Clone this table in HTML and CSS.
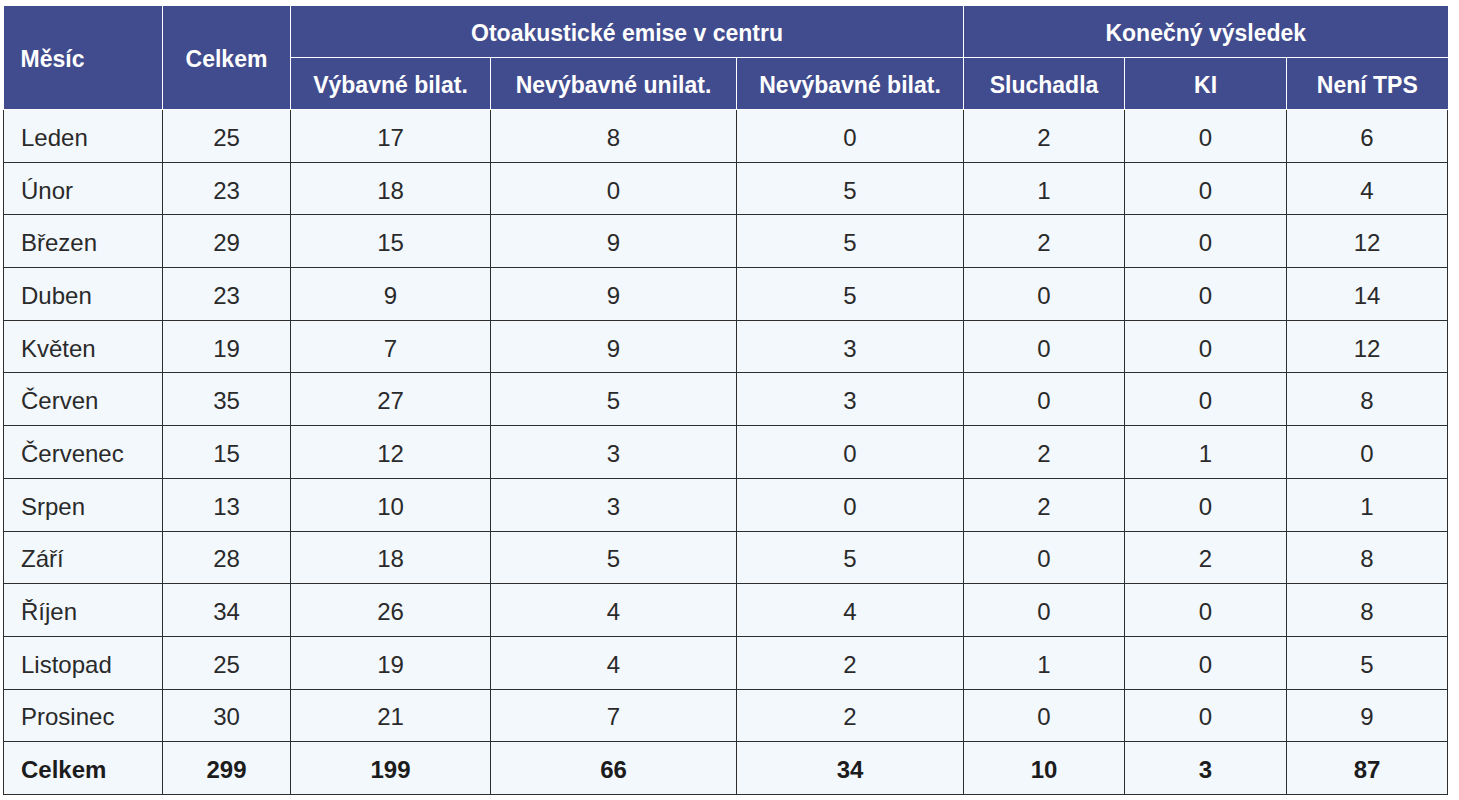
FILE: index.html
```html
<!DOCTYPE html>
<html lang="cs">
<head>
<meta charset="utf-8">
<title>Tabulka</title>
<link rel="stylesheet" href="styles.css">
</head>
<body>
<table class="data">
  <colgroup>
    <col class="c1"><col class="c2"><col class="c3"><col class="c4"><col class="c5"><col class="c6"><col class="c7"><col class="c8">
  </colgroup>
  <thead>
    <tr class="h1">
      <th rowspan="2" class="left">Měsíc</th>
      <th rowspan="2">Celkem</th>
      <th colspan="3">Otoakustické emise v centru</th>
      <th colspan="3">Konečný výsledek</th>
    </tr>
    <tr class="h2">
      <th>Výbavné bilat.</th>
      <th>Nevýbavné unilat.</th>
      <th>Nevýbavné bilat.</th>
      <th>Sluchadla</th>
      <th>KI</th>
      <th>Není TPS</th>
    </tr>
  </thead>
  <tbody>
    <tr><td class="left">Leden</td><td>25</td><td>17</td><td>8</td><td>0</td><td>2</td><td>0</td><td>6</td></tr>
    <tr><td class="left">Únor</td><td>23</td><td>18</td><td>0</td><td>5</td><td>1</td><td>0</td><td>4</td></tr>
    <tr><td class="left">Březen</td><td>29</td><td>15</td><td>9</td><td>5</td><td>2</td><td>0</td><td>12</td></tr>
    <tr><td class="left">Duben</td><td>23</td><td>9</td><td>9</td><td>5</td><td>0</td><td>0</td><td>14</td></tr>
    <tr><td class="left">Květen</td><td>19</td><td>7</td><td>9</td><td>3</td><td>0</td><td>0</td><td>12</td></tr>
    <tr><td class="left">Červen</td><td>35</td><td>27</td><td>5</td><td>3</td><td>0</td><td>0</td><td>8</td></tr>
    <tr><td class="left">Červenec</td><td>15</td><td>12</td><td>3</td><td>0</td><td>2</td><td>1</td><td>0</td></tr>
    <tr><td class="left">Srpen</td><td>13</td><td>10</td><td>3</td><td>0</td><td>2</td><td>0</td><td>1</td></tr>
    <tr><td class="left">Září</td><td>28</td><td>18</td><td>5</td><td>5</td><td>0</td><td>2</td><td>8</td></tr>
    <tr><td class="left">Říjen</td><td>34</td><td>26</td><td>4</td><td>4</td><td>0</td><td>0</td><td>8</td></tr>
    <tr><td class="left">Listopad</td><td>25</td><td>19</td><td>4</td><td>2</td><td>1</td><td>0</td><td>5</td></tr>
    <tr><td class="left">Prosinec</td><td>30</td><td>21</td><td>7</td><td>2</td><td>0</td><td>0</td><td>9</td></tr>
    <tr class="total"><td class="left">Celkem</td><td>299</td><td>199</td><td>66</td><td>34</td><td>10</td><td>3</td><td>87</td></tr>
  </tbody>
</table>
</body>
</html>
```
FILE: styles.css
```css
html, body {
  background: #ffffff;
}
body {
  margin: 6px 0 0 3px;
  font-family: "Liberation Sans", Arial, sans-serif;
}
.data {
  border-collapse: collapse;
  table-layout: fixed;
  width: 1444px;
}
.c1 { width: 159px; }
.c2 { width: 128px; }
.c3 { width: 200px; }
.c4 { width: 246px; }
.c5 { width: 227px; }
.c6 { width: 161px; }
.c7 { width: 162px; }
.c8 { width: 161px; }

.data th {
  background: #414c8e;
  color: #ffffff;
  font-weight: bold;
  font-size: 23px;
  border: 1px solid #ffffff;
  text-align: center;
  padding: 3px 0 0 0;
  height: 48px;
}
.data thead tr:first-child th {
  border-top: none;
}
.data thead th:first-child {
  border-left: none;
}
.data thead tr.h1 th:last-child,
.data thead tr.h2 th:last-child {
  border-right: none;
}
.data td {
  background: #f3f8fd;
  color: #2a2a2a;
  font-size: 24px;
  text-align: center;
  border: 1px solid #2e2e2e;
  padding: 4px 0 0 0;
  height: 47.7px;
}
.data .left {
  text-align: left;
  padding-left: 17px;
}
.data tr.total td {
  font-weight: bold;
  color: #1c1c1c;
}
```
